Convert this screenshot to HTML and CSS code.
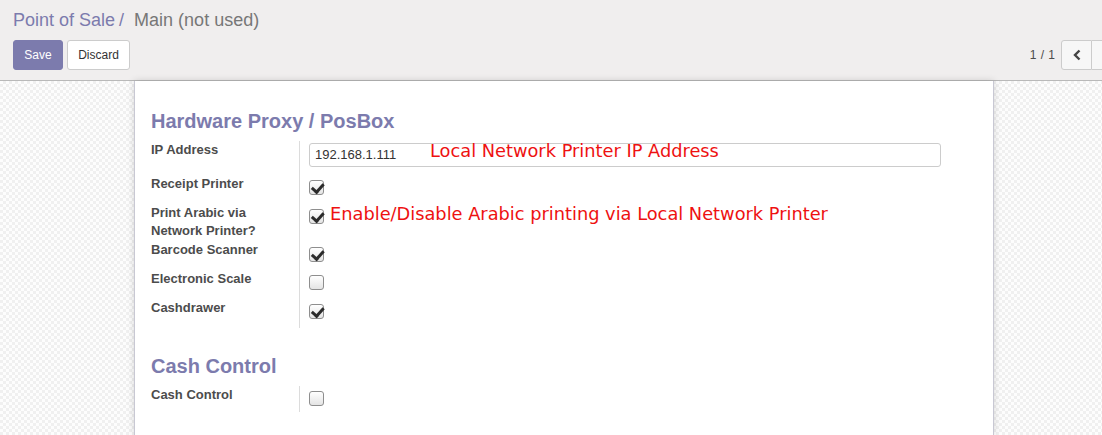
FILE: index.html
```html
<!DOCTYPE html>
<html>
<head>
<meta charset="utf-8">
<link rel="stylesheet" href="styles.css">
</head>
<body>
<div class="panel">
  <div class="crumbs">
    <span class="crumb-link">Point of Sale</span><span class="crumb-sep">/</span><span class="crumb-cur">Main (not used)</span>
  </div>
  <div class="panel-row">
    <div class="btns">
      <button class="btn btn-primary">Save</button>
      <button class="btn btn-default">Discard</button>
    </div>
    <div class="pager">
      <span class="pager-val">1 / 1</span>
      <div class="pager-btns">
        <span class="pbtn"><svg width="10" height="12" viewBox="0 0 10 12"><path d="M7.5 1.5 L3 6 L7.5 10.5" fill="none" stroke="#444" stroke-width="2.4"/></svg></span>
        <span class="pbtn pbtn-cut"></span>
      </div>
    </div>
  </div>
</div>
<div class="content">
  <div class="sheet">
    <h2 class="sec-title">Hardware Proxy / PosBox</h2>
    <div class="group">
      <div class="row row-ip">
        <div class="lbl">IP Address</div>
        <div class="fld">
          <div class="input">192.168.1.111</div>
          <span class="note note-ip">Local Network Printer IP Address</span>
        </div>
      </div>
      <div class="row">
        <div class="lbl">Receipt Printer</div>
        <div class="fld"><span class="cb on"></span></div>
      </div>
      <div class="row row-tall">
        <div class="lbl">Print Arabic via<br>Network Printer?</div>
        <div class="fld"><span class="cb on"></span><span class="note note-ar">Enable/Disable Arabic printing via Local Network Printer</span></div>
      </div>
      <div class="row">
        <div class="lbl">Barcode Scanner</div>
        <div class="fld fld-low"><span class="cb on"></span></div>
      </div>
      <div class="row">
        <div class="lbl">Electronic Scale</div>
        <div class="fld"><span class="cb"></span></div>
      </div>
      <div class="row">
        <div class="lbl">Cashdrawer</div>
        <div class="fld"><span class="cb on"></span></div>
      </div>
    </div>
    <h2 class="sec-title sec-second">Cash Control</h2>
    <div class="group">
      <div class="row row-cash">
        <div class="lbl">Cash Control</div>
        <div class="fld"><span class="cb"></span></div>
      </div>
    </div>
  </div>
</div>
</body>
</html>
```

FILE: styles.css
```css
html, body {
  margin: 0;
  padding: 0;
  height: 100%;
}
body {
  font-family: "Liberation Sans", Arial, sans-serif;
  font-size: 13px;
  color: #4c4c4c;
  overflow: hidden;
  display: flex;
  flex-direction: column;
  background: #fff;
}
.panel {
  background: #f0eeee;
  border-bottom: 1px solid #b9b9b9;
  padding: 5px 0 10px 13px;
  height: 65px;
  flex: none;
}
.crumbs {
  height: 30px;
  line-height: 31px;
  font-size: 18px;
  white-space: nowrap;
}
.crumb-link { color: #7c7bad; }
.crumb-sep { color: #7c7bad; margin: 0 10px 0 4px; }
.crumb-cur { color: #777; }
.panel-row {
  margin-top: 5px;
  display: flex;
  justify-content: space-between;
  align-items: flex-start;
}
.btns { display: flex; gap: 4px; }
.btn {
  font-family: "Liberation Sans", Arial, sans-serif;
  font-size: 12px;
  height: 30px;
  border-radius: 3px;
  padding: 0 10px;
  cursor: pointer;
}
.btn-primary {
  background: #7c7bad;
  color: #fff;
  border: 1px solid #7c7bad;
  width: 50px;
}
.btn-default {
  background: #fff;
  color: #333;
  border: 1px solid #ccc;
  width: 63px;
}
.pager {
  display: flex;
  align-items: center;
  gap: 6px;
}
.pager-val {
  font-size: 12px;
  color: #4c4c4c;
  margin-top: -1px;
  word-spacing: 1px;
}
.pager-btns { display: flex; }
.pbtn {
  width: 29px;
  height: 28px;
  border: 1px solid #ccc;
  background: #f7f7f7;
  display: flex;
  align-items: center;
  justify-content: center;
}
.pbtn:first-child { border-radius: 3px 0 0 3px; }
.pbtn-cut {
  width: 10px;
  border-left: none;
  border-right: none;
}
.content {
  flex: 1;
  background-color: #fff;
  background-image: conic-gradient(#f0f0f0 25%, #fdfdfd 0 50%, #f0f0f0 0 75%, #fdfdfd 0);
  background-size: 6px 6px;
  padding: 0 108px 0 134px;
}
.sheet {
  background: #fff;
  border-left: 1px solid #c8c8d3;
  border-right: 1px solid #c8c8d3;
  box-shadow: 0 0 7px rgba(0, 0, 0, 0.16);
  height: 100%;
  padding: 24px 52px 0 16px;
  box-sizing: border-box;
}
.sec-title {
  margin: 0 0 4px;
  font-size: 20px;
  line-height: 32px;
  font-weight: bold;
  color: #7c7bad;
}
.sec-second { margin-top: 22px; }
.group { display: flex; flex-direction: column; }
.row {
  display: grid;
  grid-template-columns: 149px 1fr;
  height: 29px;
}
.row-ip { height: 34px; }
.row-tall { height: 37px; }
.row-cash { height: 26px; }
.lbl {
  font-weight: bold;
  font-size: 13px;
  line-height: 18px;
  color: #4c4c4c;
  border-right: 1px solid #dcdcdc;
}
.fld {
  position: relative;
  padding: 5px 0 0 9px;
}
.fld-low { padding-top: 6px; }
.row-ip .fld { padding-top: 2px; }
.input {
  width: 625px;
  height: 22px;
  border: 1px solid #ccc;
  border-radius: 3px;
  line-height: 22px;
  padding-left: 5px;
  font-size: 13px;
  color: #333;
}
.cb {
  display: block;
  width: 13px;
  height: 13px;
  border: 1px solid #8e8e8e;
  border-radius: 3px;
  background: linear-gradient(#ffffff, #e4e4e4);
  position: relative;
}
.cb.on::after {
  content: "";
  position: absolute;
  left: 3.5px;
  top: -0.5px;
  width: 4.5px;
  height: 8.5px;
  border: solid #2b2b2b;
  border-width: 0 3px 3px 0;
  transform: rotate(42deg);
}
.note {
  position: absolute;
  font-family: "DejaVu Sans", sans-serif;
  font-size: 17.8px;
  color: #ee1111;
  white-space: nowrap;
  line-height: 22px;
}
.note-ip { left: 130px; top: -1px; }
.note-ar { left: 30px; top: -1px; }
```
